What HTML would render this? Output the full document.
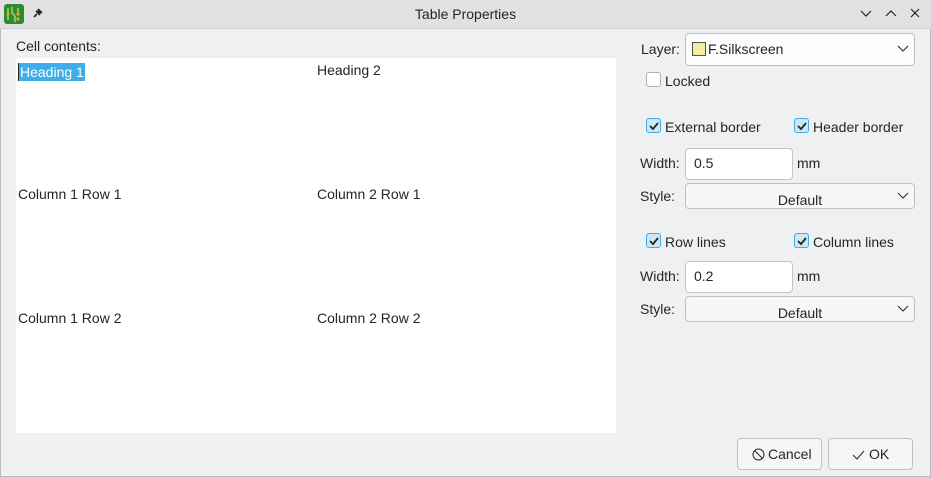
<!DOCTYPE html>
<html><head><style>
*{box-sizing:border-box}
body{margin:0;width:931px;height:477px;background:#eff0f1;font-family:"Liberation Sans",sans-serif;font-size:14px;color:#232627;position:relative;overflow:hidden}
.a{position:absolute}
.title{left:0;top:0;width:931px;height:29px;background:#e0e1e2;border-bottom:1px solid #cfd0d1}
.field{background:#fff;border:1px solid #c3c4c5;border-radius:4px}
.btn{background:#f6f6f7;border:1px solid #bfc0c1;border-radius:4px}
.cb{width:15px;height:15px;border-radius:3px;border:1px solid #b0b1b2;background:#fff}
.cb.on{background:#cfe6f5;border-color:#3daee9}
.cb.on svg{position:absolute;left:1px;top:1px}
</style></head><body>
<div class="a" style="left:0;top:0;width:931px;height:477px;border:1px solid #b9babb"></div>
<div class="a title"></div>
<div class="a" style="left:4px;top:4px;width:20px;height:20px;background:#2e8b2e;border-radius:3px"><svg width="20" height="20"><path d="M4 4v12M8 3v6l3 3v6M14 4v4" stroke="#b7d96a" fill="none" stroke-width="1.4"/><circle cx="14" cy="10" r="1.6" fill="#f0a030"/><circle cx="14" cy="15" r="1.6" fill="#f0a030"/><circle cx="4" cy="10" r="1.5" fill="#f0a030"/></svg></div>
<svg class="a" style="left:31px;top:6px" width="14" height="14"><path d="M3 11l3-3M5 5l4 4M7 3l4 4M6 6l2-2 2 2-2 2z" stroke="#232627" stroke-width="1.6" fill="#232627"/></svg>
<div class="a" style="left:0;width:931px;top:6px;text-align:center">Table Properties</div>
<svg class="a" style="left:859px;top:7px" width="62" height="14"><path d="M2 4l5 5 5-5M27 9l5-5 5 5M52 2l8 8M60 2l-8 8" stroke="#232627" stroke-width="1.2" fill="none"/></svg>
<div class="a" style="left:16px;top:38px">Cell contents:</div>
<div class="a" style="left:16px;top:58px;width:600px;height:375px;background:#fff"></div>
<div class="a" style="left:18px;top:63px;background:#3daee9;color:#fff;padding:1px 1px;border-left:1px solid #232627">Heading 1</div>
<div class="a" style="left:317px;top:62px">Heading 2</div>
<div class="a" style="left:18px;top:186px">Column 1 Row 1</div>
<div class="a" style="left:317px;top:186px">Column 2 Row 1</div>
<div class="a" style="left:18px;top:310px">Column 1 Row 2</div>
<div class="a" style="left:317px;top:310px">Column 2 Row 2</div>

<div class="a" style="left:641px;top:41px">Layer:</div>
<div class="a btn" style="left:685px;top:33px;width:230px;height:33px;background:#fcfcfc"></div>
<div class="a" style="left:692px;top:42px;width:14px;height:14px;background:#f2eda1;border:1px solid #555"></div>
<div class="a" style="left:708px;top:41px">F.Silkscreen</div>
<svg class="a" style="left:897px;top:45px" width="12" height="8"><path d="M1 1l5 5 5-5" stroke="#232627" fill="none"/></svg>
<div class="a cb" style="left:646px;top:72px"></div>
<div class="a" style="left:665px;top:73px">Locked</div>

<div class="a cb on" style="left:646px;top:118px"><svg width="12" height="12"><path d="M2 6l3 3 5-6" stroke="#232627" stroke-width="1.8" fill="none"/></svg></div>
<div class="a" style="left:665px;top:119px">External border</div>
<div class="a cb on" style="left:794px;top:118px"><svg width="12" height="12"><path d="M2 6l3 3 5-6" stroke="#232627" stroke-width="1.8" fill="none"/></svg></div>
<div class="a" style="left:813px;top:119px">Header border</div>
<div class="a" style="left:640px;top:155px">Width:</div>
<div class="a field" style="left:685px;top:148px;width:108px;height:32px"></div>
<div class="a" style="left:694px;top:155px">0.5</div>
<div class="a" style="left:797px;top:155px">mm</div>
<div class="a" style="left:640px;top:188px">Style:</div>
<div class="a btn" style="left:685px;top:183px;width:230px;height:26px;overflow:hidden"><div style="text-align:center;padding-top:8px">Default</div></div>
<svg class="a" style="left:897px;top:192px" width="12" height="8"><path d="M1 1l5 5 5-5" stroke="#232627" fill="none"/></svg>

<div class="a cb on" style="left:646px;top:233px"><svg width="12" height="12"><path d="M2 6l3 3 5-6" stroke="#232627" stroke-width="1.8" fill="none"/></svg></div>
<div class="a" style="left:665px;top:234px">Row lines</div>
<div class="a cb on" style="left:794px;top:233px"><svg width="12" height="12"><path d="M2 6l3 3 5-6" stroke="#232627" stroke-width="1.8" fill="none"/></svg></div>
<div class="a" style="left:813px;top:234px">Column lines</div>
<div class="a" style="left:640px;top:268px">Width:</div>
<div class="a field" style="left:685px;top:261px;width:108px;height:32px"></div>
<div class="a" style="left:694px;top:268px">0.2</div>
<div class="a" style="left:797px;top:268px">mm</div>
<div class="a" style="left:640px;top:301px">Style:</div>
<div class="a btn" style="left:685px;top:296px;width:230px;height:26px;overflow:hidden"><div style="text-align:center;padding-top:8px">Default</div></div>
<svg class="a" style="left:897px;top:305px" width="12" height="8"><path d="M1 1l5 5 5-5" stroke="#232627" fill="none"/></svg>

<div class="a btn" style="left:737px;top:438px;width:85px;height:32px"></div>
<svg class="a" style="left:752px;top:448px" width="13" height="13"><circle cx="6.5" cy="6.5" r="5.5" stroke="#232627" fill="none"/><path d="M2.5 2.5l8 8" stroke="#232627"/></svg>
<div class="a" style="left:768px;top:446px">Cancel</div>
<div class="a btn" style="left:828px;top:438px;width:85px;height:32px"></div>
<svg class="a" style="left:852px;top:449px" width="13" height="11"><path d="M1 6l4 4 7-8" stroke="#232627" fill="none"/></svg>
<div class="a" style="left:869px;top:446px">OK</div>
</body></html>
